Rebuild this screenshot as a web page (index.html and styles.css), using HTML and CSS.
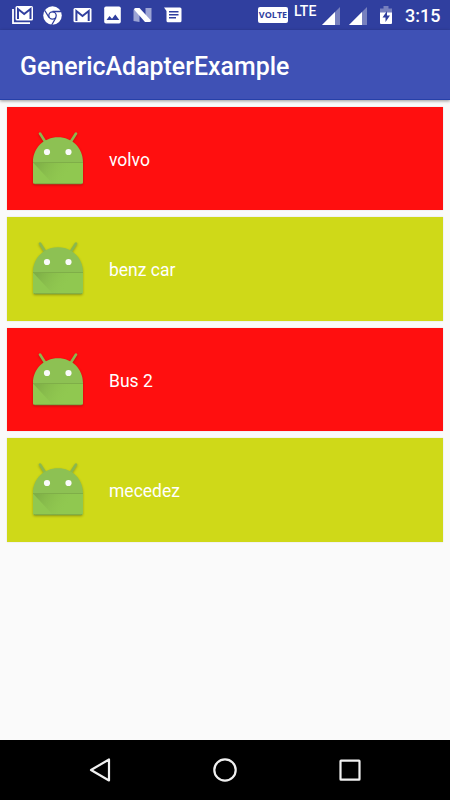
FILE: index.html
```html
<!DOCTYPE html>
<html lang="en">
<head>
  <meta charset="UTF-8" />
  <meta name="viewport" content="width=device-width, initial-scale=1.0" />
  <title>GenericAdapterExample</title>
  <link rel="stylesheet" href="styles.css">
</head>
<body>
  <svg class="defs" width="0" height="0">
    <defs>
      <linearGradient id="fold" gradientUnits="userSpaceOnUse" x1="6" y1="32" x2="32" y2="48">
        <stop offset="0" stop-color="#7fb047" />
        <stop offset="1" stop-color="#8fc54f" stop-opacity="0" />
      </linearGradient>
      <symbol id="droid" viewBox="0 0 52 56">
        <path d="M8 2.500l6 9.500M44 2.500L38 12" stroke="#8bb84e" stroke-width="2.600" stroke-linecap="round" />
        <path d="M1 31C1 17 12 6.300 26 6.300S51 17 51 31V50.500a2.500 2.500 0 0 1-2.500 2.500h-45A2.500 2.500 0 0 1 1 50.500z" fill="#8dc153" />
        <path d="M1 31.500H51V50.500a2.500 2.500 0 0 1-2.500 2.500h-45A2.500 2.500 0 0 1 1 50.500z" fill="#90c850" />
        <path d="M1 31.500H44L38 53H21z" fill="url(#fold)" />
        <path d="M1 31.500H51" stroke="#7fae48" />
        <path d="M2 52.400Q2.500 52.800 3.500 52.800H48.500Q49.500 52.800 50 52.400" fill="none" stroke="#75983d" stroke-width=".8" />
        <circle cx="15" cy="21" r="3.100" fill="#fafafa" />
        <circle cx="36.500" cy="21" r="3.100" fill="#fafafa" />
      </symbol>
    </defs>
  </svg>

  <div class="status-bar">
    <div class="notifications">
      <svg viewBox="0 0 30 30">
        <path d="M6 9v14.200h17" fill="none" stroke="#fff" stroke-width="1.800" />
        <rect x="8.500" y="6" width="17.500" height="14.500" rx="1.500" fill="#fff" />
        <path d="M11 19V9l6.200 5L23.500 9v10" fill="none" stroke="#303f9f" stroke-width="2" />
      </svg>
      <svg viewBox="0 0 30 30">
        <circle cx="15.500" cy="15.500" r="9.300" fill="#fff" />
        <circle cx="15.500" cy="15.500" r="3.700" fill="none" stroke="#303f9f" stroke-width="1.300" />
        <path d="M15.500 11.500h8.500M12 17.500L7.800 10.500M19 17.500l-4.300 7.500" stroke="#303f9f" stroke-width="1.300" />
      </svg>
      <svg viewBox="0 0 30 30">
        <rect x="6.500" y="8" width="18" height="14.200" rx="1.500" fill="#fff" />
        <path d="M9.400 21V11l6.100 5 6.200-5v10" fill="none" stroke="#303f9f" stroke-width="2" />
      </svg>
      <svg viewBox="0 0 30 30">
        <rect x="7.200" y="6.500" width="16.600" height="17" rx="1.800" fill="#fff" />
        <path d="M9.500 20l3-4 2.500 2.800 3.300-4.300 4 5.500z" fill="#303f9f" />
      </svg>
      <svg viewBox="0 0 30 30">
        <path d="M6.500 9.500l6 3v9.500l-6-1zM18.500 8h6v13.500l-6-3z" fill="#9ca4d4" />
        <path d="M7 9.500q0-1.500 1.500-1.500h4l11.500 12.500q0 1.500-1.500 1.500h-4.500z" fill="#fff" />
      </svg>
      <svg viewBox="0 0 30 30">
        <path d="M7 7.500h16q1.500 0 1.500 1.500v11.700q0 1.500-1.500 1.500H11q-1.500 0-1.500-1.500V11z" fill="#fff" />
        <path d="M12 11.700h9.500M12 14.700h9.500M12 17.700h7" stroke="#303f9f" stroke-width="1.400" />
      </svg>
    </div>
    <div class="system">
      <span class="volte">VOLTE</span>
      <span class="lte">LTE</span>
      <svg class="signal" viewBox="0 0 18 18">
        <path d="M0 18L18 0v18z" fill="#7780be" />
        <path d="M0 18L13 5v13z" fill="#fff" />
      </svg>
      <svg class="signal" viewBox="0 0 18 18">
        <path d="M0 18L18 0v18z" fill="#7780be" />
        <path d="M0 18L13 5v13z" fill="#fff" />
      </svg>
      <svg class="battery" viewBox="0 0 12 18">
        <path d="M0 2.500h3.500V0h5v2.500H12V7H0z" fill="#7780be" />
        <path d="M0 6.500h12V17q0 1-1 1H1q-1 0-1-1z" fill="#fff" />
        <path d="M7 5L2.500 11.500h3V16l4.500-6.500H7z" fill="#303f9f" />
      </svg>
      <span class="clock">3:15</span>
    </div>
  </div>

  <header class="toolbar">
    <h1>GenericAdapterExample</h1>
  </header>

  <main class="list">
    <div class="row red">
      <svg class="droid"><use href="#droid" /></svg>
      <span>volvo</span>
    </div>
    <div class="row lime">
      <svg class="droid"><use href="#droid" /></svg>
      <span>benz car</span>
    </div>
    <div class="row red">
      <svg class="droid"><use href="#droid" /></svg>
      <span>Bus 2</span>
    </div>
    <div class="row lime">
      <svg class="droid"><use href="#droid" /></svg>
      <span>mecedez</span>
    </div>
  </main>

  <nav class="nav-bar">
    <svg viewBox="0 0 30 30"><path d="M6 15L24 4.500v21z" /></svg>
    <svg viewBox="0 0 30 30"><circle cx="15" cy="15" r="10.700" /></svg>
    <svg viewBox="0 0 30 30"><rect x="5.500" y="5.700" width="19" height="19" rx=".5" /></svg>
  </nav>
</body>
</html>
```
FILE: styles.css
```css
:root {
  --primary: #3f51b5;
  --primary-dark: #303f9f;
}

* {
  box-sizing: border-box;
}

body {
  margin: 0;
  height: 100vh;
  display: flex;
  flex-direction: column;
  overflow: hidden;
  background: #fafafa;
  color: #fff;
  font-family: Roboto, sans-serif;
}

svg {
  display: block;
  flex: none;
}

.defs {
  position: absolute;
}

.status-bar {
  flex: none;
  height: 30px;
  display: flex;
  justify-content: space-between;
  padding: 0 9px 0 7px;
  background: var(--primary-dark);
}

.notifications {
  display: flex;
}

.notifications svg {
  width: 30px;
  height: 30px;
}

.system {
  display: flex;
  align-items: flex-start;
}

.volte {
  width: 30px;
  height: 16px;
  margin: 7px 6px 0 0;
  border-radius: 2px;
  background: #fff;
  color: var(--primary-dark);
  font: bold 9px/16px "Open Sans", sans-serif;
  text-align: center;
}

.lte {
  width: 24px;
  margin: 4px 4px 0 0;
  font-size: 14px;
  font-weight: 500;
  line-height: 15px;
}

.signal {
  width: 18px;
  height: 18px;
  margin: 7px 9px 0 0;
}

.battery {
  width: 12px;
  height: 18px;
  margin: 6px 13px 0 4px;
}

.clock {
  width: 36px;
  font-size: 18px;
  font-weight: 500;
  line-height: 31px;
}

.toolbar {
  flex: none;
  height: 70px;
  padding-left: 20px;
  background: var(--primary);
  border-bottom: 1px solid #2640a8;
  box-shadow: 0 1px 3px rgba(0, 0, 0, 0.4);
}

.toolbar h1 {
  margin: 0;
  font-size: 24.9px;
  font-weight: 500;
  line-height: 74px;
}

.list {
  flex: 1;
  display: flex;
  flex-direction: column;
  gap: 7px;
  padding: 6.8px 7px;
}

.row {
  height: 103.5px;
  display: flex;
  align-items: center;
  font-size: 17.5px;
  box-shadow: 0 0 1px rgba(0, 0, 0, 0.2);
}

.row.red {
  background: #ff0f0f;
}

.row.lime {
  background: #cfd918;
}

.row span {
  padding-top: 2.4px;
}

.droid {
  width: 52px;
  height: 56px;
  margin: 0 25px;
  filter: drop-shadow(0 1px 1px rgba(0, 0, 0, 0.25));
}

.nav-bar {
  flex: none;
  height: 60px;
  display: flex;
  justify-content: space-between;
  align-items: center;
  padding: 0 85px;
  background: #000;
}

.nav-bar svg {
  width: 30px;
  height: 30px;
  fill: none;
  stroke: #f0f0f0;
  stroke-width: 2.2;
  stroke-linejoin: round;
}
```
